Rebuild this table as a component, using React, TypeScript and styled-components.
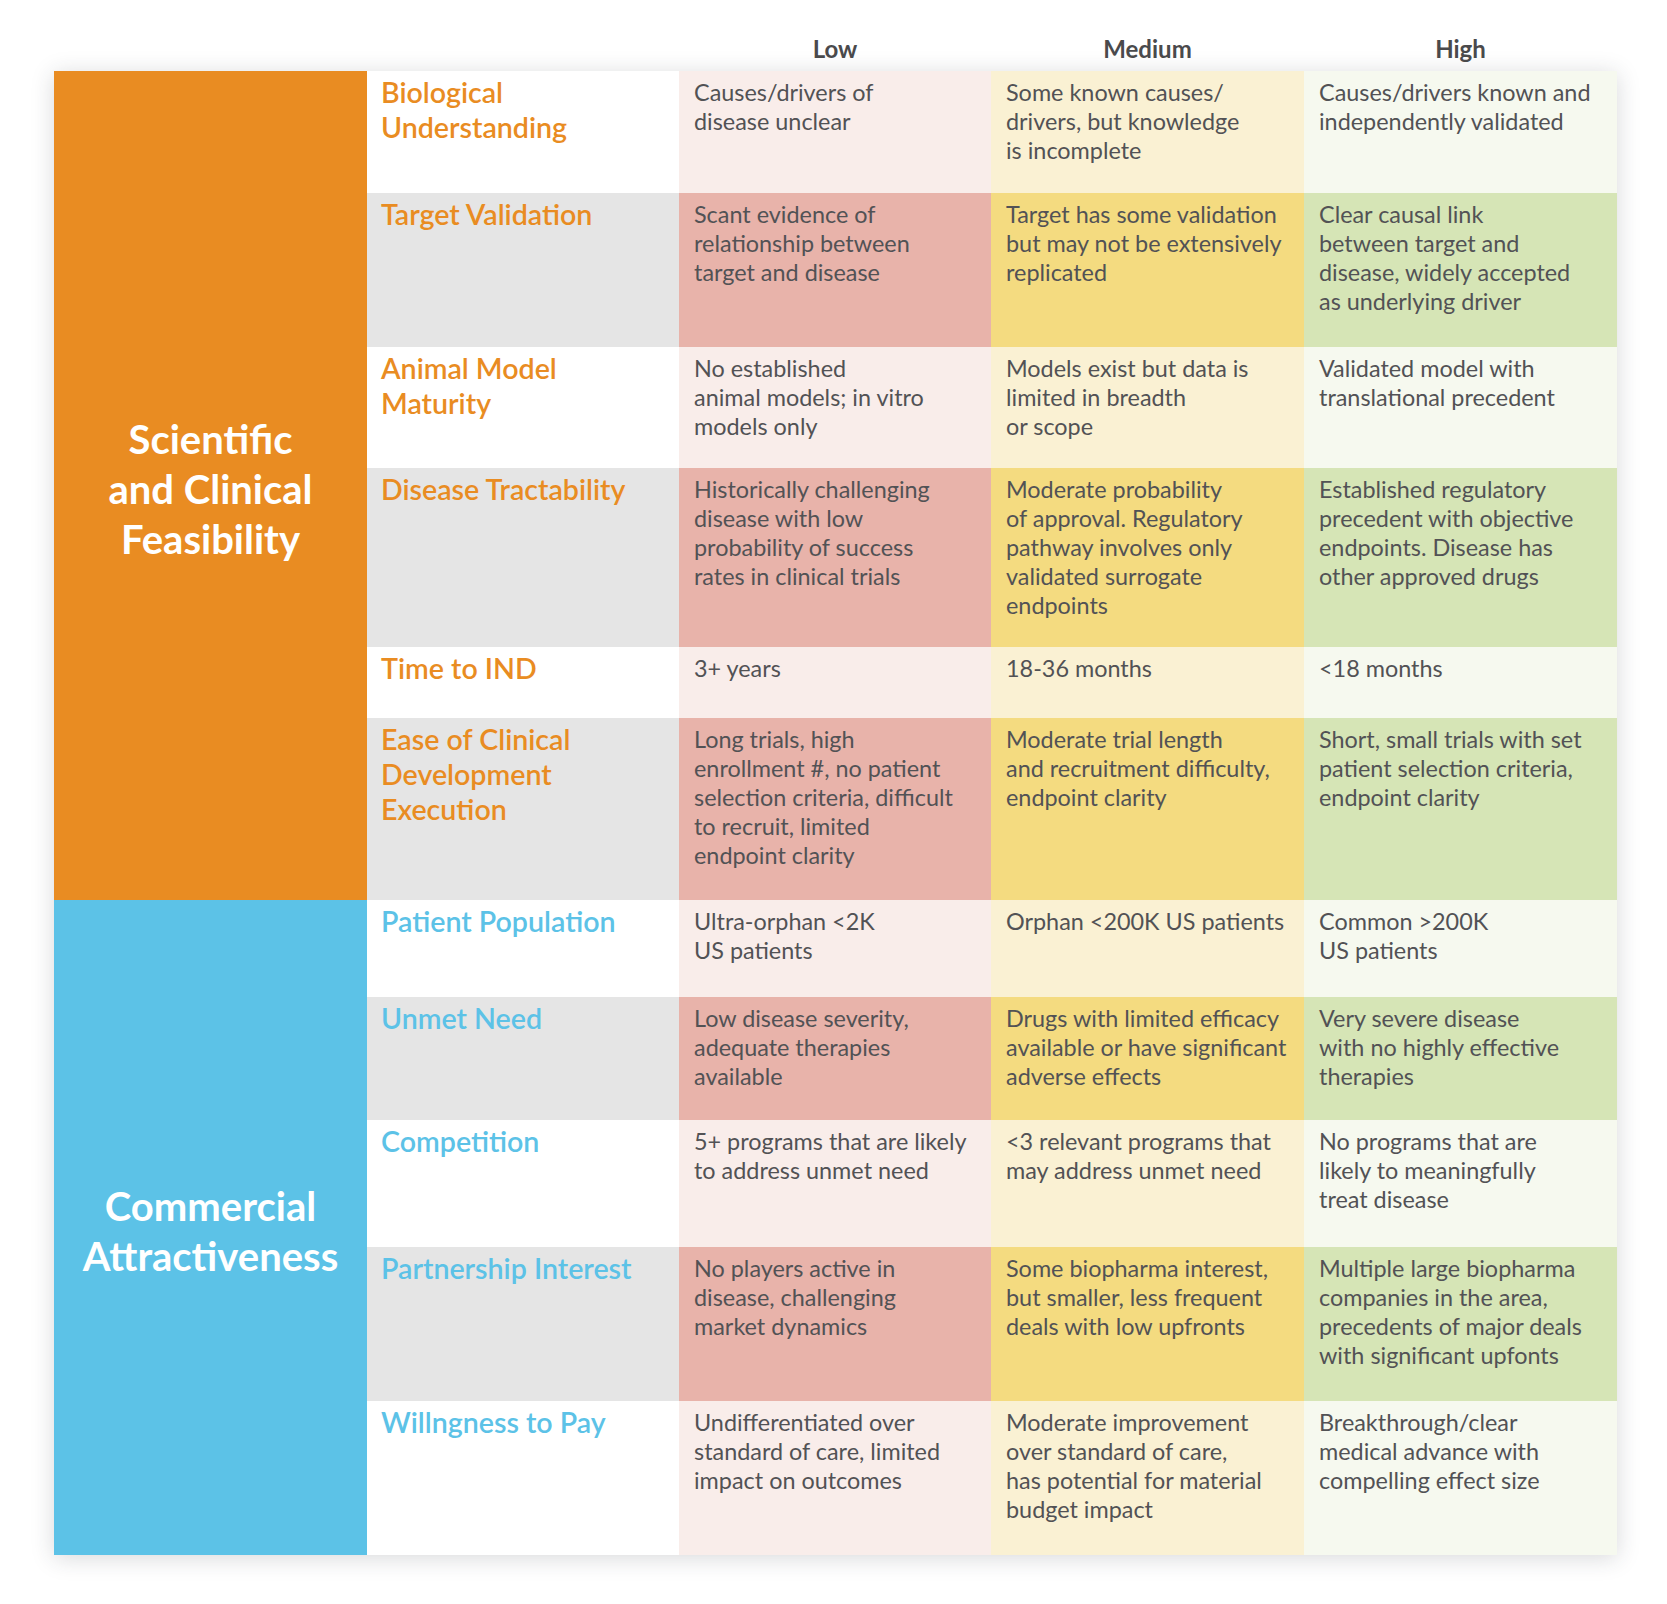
import React from "react";
import styled, { createGlobalStyle } from "styled-components";

const GlobalStyle = createGlobalStyle`
  html, body { margin: 0; padding: 0; background: #ffffff; }
  body { font-family: Lato, "Open Sans", sans-serif; color: #4d4d4f; }
`;

const COLS = "313px 312px 312px 313px 313px";

type Tone = "light" | "dark";
type Level = "crit" | "low" | "med" | "high";

const palette: Record<Level, Record<Tone, string>> = {
  crit: { light: "#ffffff", dark: "#e5e5e5" },
  low: { light: "#f9edea", dark: "#e8b3aa" },
  med: { light: "#faf1d3", dark: "#f4db80" },
  high: { light: "#f6f9ef", dark: "#d6e5b6" },
};

const Page = styled.main`
  padding: 0 50px 48px 54px;
`;

const HeaderRow = styled.div`
  display: grid;
  grid-template-columns: ${COLS};
  height: 71px;
  padding-top: 34px;
  box-sizing: border-box;
`;

const HeaderLabel = styled.div`
  text-align: center;
  font-weight: 700;
  font-size: 24px;
  line-height: 29px;
  color: #4a4a4c;
`;

const Table = styled.section`
  display: flex;
  flex-direction: column;
  box-shadow: 0 3px 22px rgba(40, 45, 55, 0.18);
`;

const Section = styled.div<{ $color: string }>`
  display: grid;
  grid-template-columns: 313px 1fr;
  --accent: ${(p) => p.$color};
`;

const Category = styled.div`
  background: var(--accent);
  display: flex;
  flex-direction: column;
  align-items: center;
  justify-content: center;
  color: #ffffff;
  font-weight: 700;
  font-size: 40px;
  line-height: 50px;
  text-align: center;
  padding-top: 6px;
`;

const Rows = styled.div`
  display: flex;
  flex-direction: column;
`;

const Row = styled.div<{ $h: number }>`
  display: grid;
  grid-template-columns: 312px 312px 313px 313px;
  height: ${(p) => p.$h}px;
`;

const Cell = styled.div<{ $level: Level; $tone: Tone }>`
  background: ${(p) => palette[p.$level][p.$tone]};
  padding: 7px 12px 0 15px;
  font-size: 23.4px;
  line-height: 29px;
  color: #525255;
  white-space: nowrap;
`;

const CritCell = styled(Cell)`
  padding: 4px 12px 0 14px;
  font-size: 28.6px;
  font-weight: 600;
  line-height: 35px;
  color: var(--accent);
`;

const Line = styled.span`
  display: block;
`;

type RowData = { h: number; crit: string[]; low: string[]; med: string[]; high: string[] };

const sci: RowData[] = [
  {
    h: 122,
    crit: ["Biological", "Understanding"],
    low: ["Causes/drivers of", "disease unclear"],
    med: ["Some known causes/", "drivers, but knowledge", "is incomplete"],
    high: ["Causes/drivers known and", "independently validated"],
  },
  {
    h: 154,
    crit: ["Target Validation"],
    low: ["Scant evidence of", "relationship between", "target and disease"],
    med: ["Target has some validation", "but may not be extensively", "replicated"],
    high: ["Clear causal link", "between target and", "disease, widely accepted", "as underlying driver"],
  },
  {
    h: 121,
    crit: ["Animal Model", "Maturity"],
    low: ["No established", "animal models; in vitro", "models only"],
    med: ["Models exist but data is", "limited in breadth", "or scope"],
    high: ["Validated model with", "translational precedent"],
  },
  {
    h: 179,
    crit: ["Disease Tractability"],
    low: ["Historically challenging", "disease with low", "probability of success", "rates in clinical trials"],
    med: ["Moderate probability", "of approval. Regulatory", "pathway involves only", "validated surrogate", "endpoints"],
    high: ["Established regulatory", "precedent with objective", "endpoints. Disease has", "other approved drugs"],
  },
  {
    h: 71,
    crit: ["Time to IND"],
    low: ["3+ years"],
    med: ["18-36 months"],
    high: ["<18 months"],
  },
  {
    h: 182,
    crit: ["Ease of Clinical", "Development", "Execution"],
    low: ["Long trials, high", "enrollment #, no patient", "selection criteria, difficult", "to recruit, limited", "endpoint clarity"],
    med: ["Moderate trial length", "and recruitment difficulty,", "endpoint clarity"],
    high: ["Short, small trials with set", "patient selection criteria,", "endpoint clarity"],
  },
];

const com: RowData[] = [
  {
    h: 97,
    crit: ["Patient Population"],
    low: ["Ultra-orphan <2K", "US patients"],
    med: ["Orphan <200K US patients"],
    high: ["Common >200K", "US patients"],
  },
  {
    h: 123,
    crit: ["Unmet Need"],
    low: ["Low disease severity,", "adequate therapies", "available"],
    med: ["Drugs with limited efficacy", "available or have significant", "adverse effects"],
    high: ["Very severe disease", "with no highly effective", "therapies"],
  },
  {
    h: 127,
    crit: ["Competition"],
    low: ["5+ programs that are likely", "to address unmet need"],
    med: ["<3 relevant programs that", "may address unmet need"],
    high: ["No programs that are", "likely to meaningfully", "treat disease"],
  },
  {
    h: 154,
    crit: ["Partnership Interest"],
    low: ["No players active in", "disease, challenging", "market dynamics"],
    med: ["Some biopharma interest,", "but smaller, less frequent", "deals with low upfronts"],
    high: ["Multiple large biopharma", "companies in the area,", "precedents of major deals", "with significant upfonts"],
  },
  {
    h: 154,
    crit: ["Willngness to Pay"],
    low: ["Undifferentiated over", "standard of care, limited", "impact on outcomes"],
    med: ["Moderate improvement", "over standard of care,", "has potential for material", "budget impact"],
    high: ["Breakthrough/clear", "medical advance with", "compelling effect size"],
  },
];

const Lines = ({ lines }: { lines: string[] }) => (
  <>
    {lines.map((l, i) => (
      <Line key={i}>{l}</Line>
    ))}
  </>
);

function CriteriaSection({
  color,
  title,
  rows,
}: {
  color: string;
  title: string[];
  rows: RowData[];
}) {
  return (
    <Section $color={color}>
      <Category>
        <Lines lines={title} />
      </Category>
      <Rows>
        {rows.map((r, i) => {
          const tone: Tone = i % 2 === 1 ? "dark" : "light";
          return (
            <Row key={i} $h={r.h}>
              <CritCell $level="crit" $tone={tone}>
                <Lines lines={r.crit} />
              </CritCell>
              <Cell $level="low" $tone={tone}>
                <Lines lines={r.low} />
              </Cell>
              <Cell $level="med" $tone={tone}>
                <Lines lines={r.med} />
              </Cell>
              <Cell $level="high" $tone={tone}>
                <Lines lines={r.high} />
              </Cell>
            </Row>
          );
        })}
      </Rows>
    </Section>
  );
}

export default function App() {
  return (
    <>
      <GlobalStyle />
      <Page>
        <HeaderRow>
          <span />
          <span />
          <HeaderLabel>Low</HeaderLabel>
          <HeaderLabel>Medium</HeaderLabel>
          <HeaderLabel>High</HeaderLabel>
        </HeaderRow>
        <Table>
          <CriteriaSection color="#e98c22" title={["Scientific", "and Clinical", "Feasibility"]} rows={sci} />
          <CriteriaSection color="#5cc2e7" title={["Commercial", "Attractiveness"]} rows={com} />
        </Table>
      </Page>
    </>
  );
}
